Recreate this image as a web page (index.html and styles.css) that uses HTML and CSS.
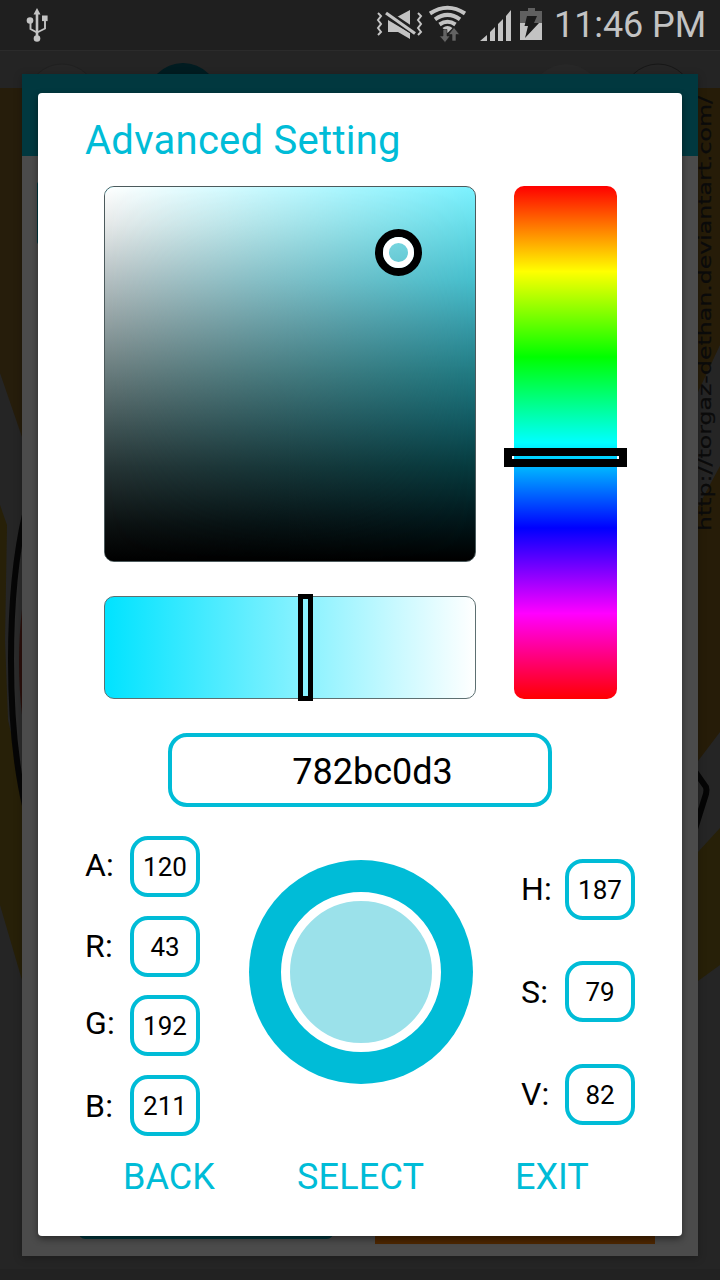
FILE: index.html
```html
<!DOCTYPE html>
<html lang="en">
<head>
<meta charset="utf-8">
<title>Advanced Setting</title>
<link rel="stylesheet" href="styles.css">
</head>
<body>
<div class="screen">
  <svg class="wallpaper" width="720" height="1280" viewBox="0 0 720 1280">
    <rect width="720" height="1280" fill="#252525"/>
    <path d="M0 88H22V437L0 373Z" fill="#261d0b"/>
    <path d="M0 505L7 525L5 640L8 720L22 780V980L0 905Z" fill="#272008"/>
    <ellipse cx="60" cy="660" rx="49" ry="208" fill="#2b2b2b" stroke="#060606" stroke-width="6"/>
    <ellipse cx="60" cy="662" rx="41" ry="140" fill="#2a0f0b"/>
    <path d="M698 88H720V345L698 392ZM720 466V732L698 761V507Z" fill="#261c08"/>
    <path d="M720 828V965L698 981V852Z" fill="#272008"/>
    <path d="M694 770L706 787Q707 790 706 794L694 832" fill="none" stroke="#050505" stroke-width="6"/>
    <text class="watermark" transform="translate(711 531) rotate(-90)" textLength="435" lengthAdjust="spacingAndGlyphs">http://torgaz-dethan.deviantart.com/</text>
    <rect y="50" width="720" height="38" fill="#242424"/>
    <circle cx="62" cy="99" r="35" fill="#262626" stroke="#202020"/>
    <circle cx="183" cy="99" r="36" fill="#011c21"/>
    <circle cx="566" cy="99" r="35" fill="#272727"/>
    <circle cx="658" cy="99" r="35" fill="#252525" stroke="#171717"/>
    <rect y="50" width="720" height="1" fill="#2b2b2b"/>
    <rect y="1269" width="720" height="11" fill="#222"/>
  </svg>

  <header class="status">
    <svg class="usb" width="24" height="36" viewBox="0 0 24 36" fill="#c3c3c3">
      <path d="M12 0l3.500 6.500h-2.200v22h-2.600v-22H8.500z"/>
      <circle cx="5" cy="12.500" r="3.300"/><rect x="17" y="7.500" width="5.600" height="5.600"/><circle cx="12" cy="30.500" r="3.300"/>
      <path d="M5.500 14v7l6.500 3.500 8-4V12" fill="none" stroke="#c3c3c3" stroke-width="1.9"/>
    </svg>
    <div class="status-right">
      <svg width="170" height="40" viewBox="0 0 170 40" fill="#c3c3c3">
        <path d="M2 9l3 3-3 4 3 4-3 4 3 4-3 3M42 9l3 3-3 4 3 4-3 4 3 4-3 3" fill="none" stroke="#c3c3c3" stroke-width="2"/>
        <path d="M20 13.500L34 6V22ZM12 16L34 29V35L22 28H12Z"/>
        <path d="M10 9L40 29" stroke="#1f1f1f" stroke-width="7"/>
        <path d="M10 9L39 29.500" stroke="#c3c3c3" stroke-width="3.200"/>
        <g fill="none" stroke="#c3c3c3" stroke-width="4"><path d="M54 9.500Q71.500 -2 89 9.500"/><path d="M59 15.300Q71.500 6.500 84 15.300"/><path d="M63.500 20.500Q71.500 15 79.500 20.500"/></g>
        <path d="M66.500 24Q71.500 20 76.500 24L71.500 29Z"/>
        <path d="M67 25.500h4v6.500h3l-5 6.500-5.500-6.500h3.500zM76 37V30.500h-3.500L78 23.500l5.500 7H80V37z" fill="#636363" stroke="#1f1f1f" stroke-width=".6"/>
        <path d="M104 37L111 31V37ZM114 28L119 23V37H114ZM122 20L127 15V37H122ZM130 12L135 6V37H130Z"/>
        <path d="M144 7h8V4h7v3h7v12h-22z" fill="#606060"/>
        <path d="M144 19h22v17h-22z"/>
        <path d="M151 12h10l-3 7h5L149 34l3-12h-3.500z" fill="#1b1b1b"/>
      </svg>
      <span class="clock">11:46 PM</span>
    </div>
  </header>

  <div class="backdrop">
    <div class="backdrop-bar"></div>
    <div class="backdrop-body"><i class="action-side"></i></div>
    <div class="backdrop-actions"><i class="action-teal"></i><i class="action-orange"></i></div>
  </div>

  <main class="dialog">
    <h1 class="title"><span>Advanced Setting</span></h1>
    <section class="picker">
      <div class="shade"><div class="shade-fill"></div><i class="shade-thumb"></i></div>
      <div class="hue"><i class="hue-thumb"></i></div>
      <div class="alpha"><i class="alpha-thumb"></i></div>
    </section>
    <div class="hex"><span>782bc0d3</span></div>
    <section class="values">
      <div class="fields argb">
        <label class="field"><span class="name">A:</span><b>120</b></label>
        <label class="field"><span class="name low">R:</span><b>43</b></label>
        <label class="field"><span class="name high">G:</span><b>192</b></label>
        <label class="field"><span class="name low">B:</span><b>211</b></label>
      </div>
      <div class="preview"><div class="swatch"></div></div>
      <div class="fields hsv">
        <label class="field"><span class="name">H:</span><b>187</b></label>
        <label class="field"><span class="name">S:</span><b>79</b></label>
        <label class="field"><span class="name">V:</span><b>82</b></label>
      </div>
    </section>
    <nav class="buttons"><span class="back">BACK</span><span class="select">SELECT</span><span class="exit">EXIT</span></nav>
  </main>
</div>
</body>
</html>
```
FILE: styles.css
```css
*, *::after { box-sizing: border-box; }
body { margin: 0; background: #252525; font-family: Roboto, sans-serif; }
.screen { position: relative; width: 720px; height: 1280px; overflow: hidden; }
.wallpaper { position: absolute; left: 0; top: 0; }
.watermark { font: 17px "DejaVu Sans", sans-serif; fill: #0b0b0b; stroke: #0b0b0b; stroke-width: .2px; }

.status { position: relative; height: 50px; background: #1f1f1f; display: flex; justify-content: space-between; align-items: flex-start; padding: 0 14px 0 25px; }
.usb { margin-top: 8px; }
.status-right { display: flex; gap: 8px; }
.status-right svg { margin-top: 4px; }
.clock { font-size: 36px; line-height: 50px; color: #c3c3c3; white-space: nowrap; letter-spacing: -.1px; }

.backdrop { position: absolute; left: 22px; top: 74px; width: 676px; height: 1182px; background: #4b4b4b; display: flex; flex-direction: column; box-shadow: 0 2px 8px rgba(0,0,0,.25); }
.backdrop-bar { height: 82px; background: #01383f; }
.backdrop-body { flex: 1; padding: 26px 15px 0; }
.action-side { display: block; width: 60px; height: 62px; border-radius: 2px; background: #01383f; }
.backdrop-body + .backdrop-actions { display: flex; justify-content: space-between; align-items: flex-start; height: 32px; padding: 0 43px 0 56px; }
.action-teal { width: 256px; height: 15px; border-radius: 8px; background: #01383f; }
.action-orange { width: 280px; height: 20px; background: #4d2600; }

.dialog { position: absolute; left: 38px; top: 93px; width: 644px; height: 1143px; background: #fff; border-radius: 4px; box-shadow: 0 3px 7px rgba(0,0,0,.45); }
.title { margin: 0; height: 93px; padding: 25px 0 0 47px; font-size: 40px; font-weight: 400; line-height: 46px; letter-spacing: .26px; color: #00bcd7; white-space: nowrap; }

.picker { display: grid; grid-template-columns: 372px 103px; grid-template-rows: 376px 103px; gap: 34px 38px; padding-left: 66px; }
.shade, .hue, .alpha { position: relative; border-radius: 10px; }
.shade { border: 1px solid #4c5a5c; overflow: hidden; background: linear-gradient(#7cf2ff, #66deea 10%, #46bfcd 25%, #359ba8 37%, #207a82 50%, #125c64 62%, #063a3e 75%, #021a1e 88%, #000); }
.shade-fill { height: 100%; background: linear-gradient(#fff, #e6e8e8 10%, #b4bec0 25%, #687a7b 50%, #3e5051 65%, #263435 75%, #0c1212 90%, #000); -webkit-mask-image: linear-gradient(90deg, #000, transparent); mask-image: linear-gradient(90deg, #000, transparent); }
.shade-thumb { position: absolute; left: 270px; top: 41.500px; width: 47px; height: 47px; border: 8px solid #000; border-radius: 50%; }
.shade-thumb::after { content: ""; display: block; width: 31px; height: 31px; border: 6px solid #fff; border-radius: 50%; }
.hue { grid-row: span 2; background: linear-gradient(#f00, #ff0 16.67%, #0f0 33.33%, #0ff 50%, #00f 66.67%, #f0f 83.33%, #f00); }
.hue-thumb { position: absolute; left: -10px; top: 262px; width: 123px; height: 19px; border: 8px solid #000; }
.alpha { border: 1px solid #5d7072; background: linear-gradient(90deg, #00e3ff, #fff); }
.alpha-thumb { position: absolute; left: 193px; top: -3px; width: 15px; height: 107px; border: 5px solid #000; }

.hex { width: 384px; height: 74px; margin: 34px 0 0 130px; padding: 2px 0 0 25px; border: 4px solid #00bcd7; border-radius: 19px; font-size: 36px; line-height: 67px; text-align: center; color: #000; }
.values { display: flex; justify-content: space-between; height: 302px; margin-top: 29px; padding: 0 47px; }
.fields { display: flex; flex-direction: column; }
.argb { gap: 18.700px; width: 115px; }
.hsv { gap: 41.500px; width: 114px; padding-top: 22.500px; }
.field { display: flex; justify-content: space-between; align-items: center; height: 61px; color: #000; }
.name { font-size: 32px; line-height: 38px; margin-top: -4px; letter-spacing: .2px; }
.name.low { margin-top: 0; }
.name.high { margin-top: -5px; }
.hsv .name { margin-top: 0; }
.field b { width: 70px; height: 61px; border: 4px solid #00bcd7; border-radius: 18px; font-size: 26px; font-weight: 400; line-height: 55px; text-align: center; }
.preview { width: 224px; height: 224px; margin: 24px 0 0; padding: 32px; border-radius: 50%; background: #00bcd7; }
.swatch { width: 160px; height: 160px; border: 9.500px solid #fff; border-radius: 50%; background: #9be1ea; }
.buttons { display: flex; padding: 18px 0 0 85px; font-size: 36px; line-height: 42px; color: #00bcd7; }
.back { width: 174px; }
.select { width: 218px; letter-spacing: .2px; }
```
